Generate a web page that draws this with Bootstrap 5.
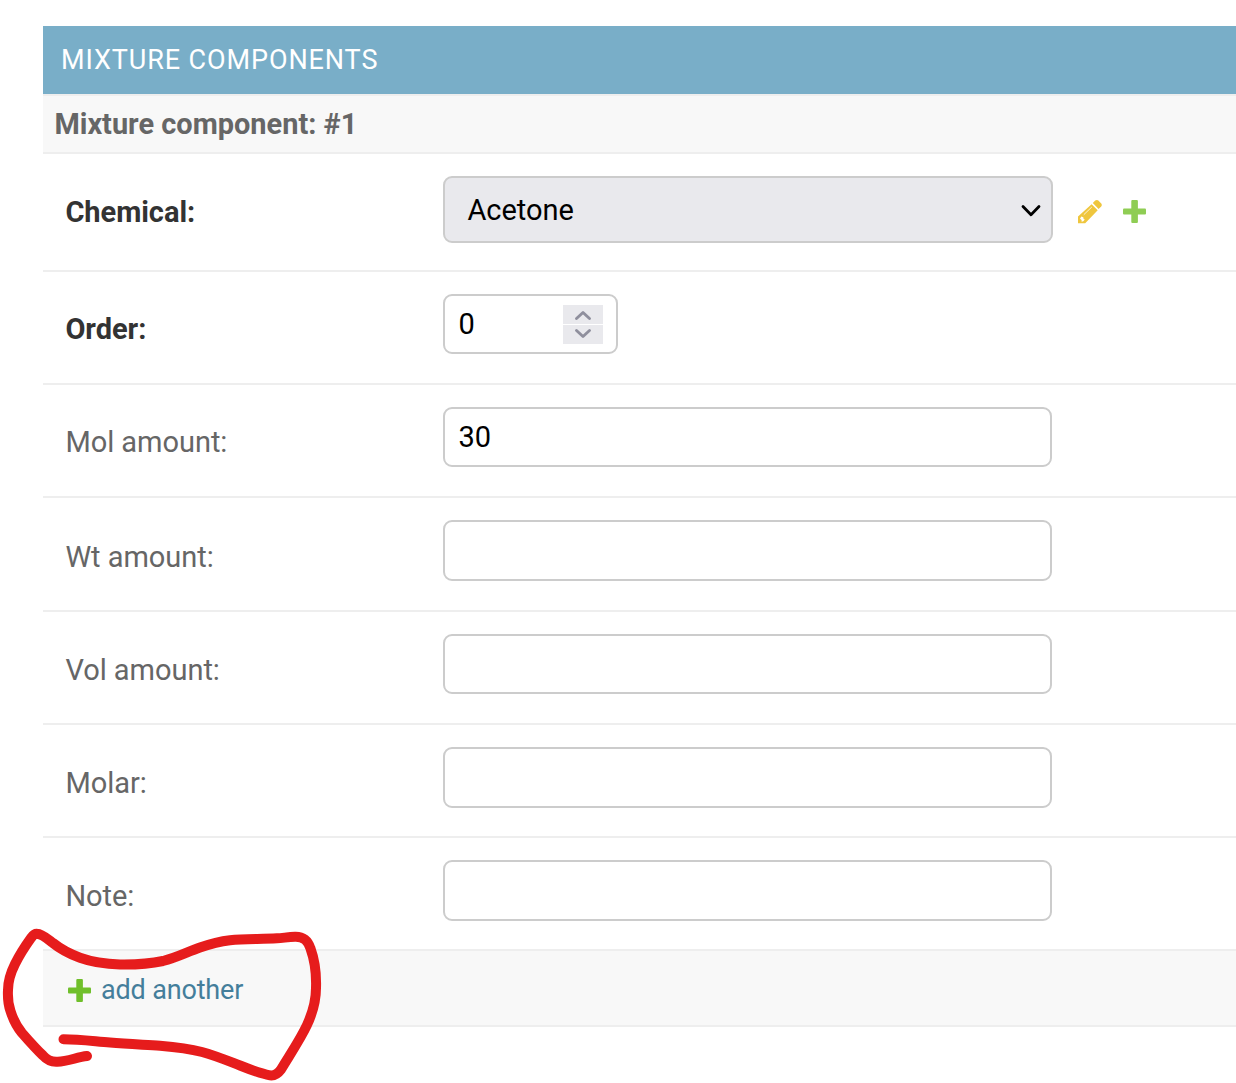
<!DOCTYPE html>
<html lang="en">
<head>
<meta charset="utf-8">
<title>Mixture components</title>
<link rel="stylesheet" href="https://cdn.jsdelivr.net/npm/bootstrap@5.3.0/dist/css/bootstrap.min.css">
<style>
body{font-family:Roboto,"Liberation Sans",sans-serif;font-size:29px;line-height:34px;color:#666;background:#fff;height:1083px;overflow:hidden}
.inline-group{padding:26px 0 0 43px}
.group-title{height:68px;background:#79aec8;color:#fff;font-size:27px;line-height:68px;letter-spacing:.9px;padding-left:18px;font-weight:400}
.item-title{height:60px;background:#f8f8f8;border-top:2px solid #eee;border-bottom:2px solid #eee;font-size:28.95px;line-height:56px;font-weight:700;padding-left:11.400px}
.form-line{height:113px;border-bottom:2px solid #eee;padding:22px 0 0 22px}
.form-line.tall{height:118px}
.form-line.plus-one{height:114px}
.field-label{width:378px;padding:18px 0 0 .4px;flex:none;letter-spacing:-.04px}
.field-label.drop{padding-top:19px}
.field-label.drop-more{padding-top:20px}
.required{font-weight:700;color:#333}
.form-line .form-control,.form-line .form-select{font-size:29px;line-height:34px;color:#000;border:2px solid #ccc;border-radius:9px;height:60px;width:609px;padding:0 13.400px;box-shadow:none}
.form-line .form-control.high{height:61px}
.form-line .form-select{height:67px;width:610px;background:#e9e9ed;padding:0 22.400px}
.form-line .order-input{width:175px}
.arrow{right:11px;top:28px;pointer-events:none}
.spinner{right:15px;top:11px;gap:1px}
.spin-btn{width:40px;height:19px;background:#e9e9ed}
.edit-icon{margin:23px 0 0 24px}
.add-icon{margin:24px 0 0 20px}
.row-icon{margin:4px 10px 0 0}
.add-row{height:76px;background:#f8f8f8;border-bottom:2px solid #eee;padding:0 0 0 25px;font-size:27px;letter-spacing:-.17px}
.add-row a{color:#447e9b;line-height:32px;padding-top:3px}
.scribble{left:0;top:0;pointer-events:none}
</style>
</head>
<body class="position-relative">
<main class="inline-group">
  <h2 class="group-title m-0">MIXTURE COMPONENTS</h2>
  <h3 class="item-title m-0">Mixture component: #1</h3>

  <div class="form-line tall d-flex align-items-start">
    <label class="field-label drop required" for="chem">Chemical:</label>
    <div class="position-relative">
      <select class="form-select" id="chem"><option>Acetone</option></select>
      <svg class="arrow position-absolute" width="22" height="14" viewBox="0 0 22 14"><path d="M3 2.500 11 10.700 19 2.500" fill="none" stroke="#000" stroke-width="2.800" stroke-linecap="round" stroke-linejoin="round"/></svg>
    </div>
    <svg class="edit-icon" width="26" height="26" viewBox="0 0 26 26">
      <g fill="#efc63e"><path d="M15.800 4 18.200 1.600Q20 .3 21.600 1.700L24.200 4.400Q25.700 6 24.200 7.500L21.600 10Z"/>
      <path fill-rule="evenodd" d="M14.600 5.200 20.700 11.200 8.200 24.300H1V17.500ZM4.300 17.600 3 19.800 4.600 21.100 4.600 22.800 6.300 22.300 7.800 20.600 6.600 20 6.300 18.200Z"/></g>
      <path d="M6.800 15.700 14.800 8" stroke="#fff" stroke-width=".8"/>
    </svg>
    <svg class="add-icon" width="24" height="24" viewBox="0 0 24 24" fill="#8fcd54"><rect x="8.300" width="6.600" height="23" rx="1"/><rect y="8.400" width="23" height="6.200" rx="1"/></svg>
  </div>

  <div class="form-line d-flex align-items-start">
    <label class="field-label required" for="order">Order:</label>
    <div class="position-relative">
      <input class="form-control order-input" id="order" type="text" value="0">
      <div class="spinner position-absolute d-flex flex-column">
        <div class="spin-btn d-flex justify-content-center"><svg width="18" height="19" viewBox="0 0 18 19"><path d="M2.500 13.500 9 7.500 15.500 13.500" fill="none" stroke="#8f8f9d" stroke-width="2.900" stroke-linecap="round" stroke-linejoin="round"/></svg></div>
        <div class="spin-btn d-flex justify-content-center"><svg width="18" height="19" viewBox="0 0 18 19"><path d="M2.500 5.500 9 11.500 15.500 5.500" fill="none" stroke="#8f8f9d" stroke-width="2.900" stroke-linecap="round" stroke-linejoin="round"/></svg></div>
      </div>
    </div>
  </div>

  <div class="form-line d-flex align-items-start">
    <label class="field-label" for="mol">Mol amount:</label>
    <input class="form-control" id="mol" type="text" value="30">
  </div>
  <div class="form-line plus-one d-flex align-items-start">
    <label class="field-label drop-more" for="wt">Wt amount:</label>
    <input class="form-control high" id="wt" type="text">
  </div>
  <div class="form-line d-flex align-items-start">
    <label class="field-label drop" for="vol">Vol amount:</label>
    <input class="form-control" id="vol" type="text">
  </div>
  <div class="form-line d-flex align-items-start">
    <label class="field-label drop" for="molar">Molar:</label>
    <input class="form-control high" id="molar" type="text">
  </div>
  <div class="form-line d-flex align-items-start">
    <label class="field-label drop" for="note">Note:</label>
    <input class="form-control high" id="note" type="text">
  </div>

  <div class="add-row d-flex align-items-center">
    <svg class="row-icon" width="23" height="23" viewBox="0 0 23 23" fill="#70bf2b"><rect x="8.300" width="6.600" height="23" rx="1"/><rect y="8.400" width="23" height="6.200" rx="1"/></svg>
    <a class="text-decoration-none" href="#">add another</a>
  </div>
</main>
<svg class="scribble position-absolute" width="340" height="1083" viewBox="0 0 340 1083">
  <path fill="none" stroke="#e61c1c" stroke-width="10" stroke-linecap="round" stroke-linejoin="round" d="M63.500 1039.300C80 1039.300 95 1041.500 110 1042.600C127 1044 143 1044.700 160 1045.800C174 1047 188 1048.500 202 1052C215 1055.500 227 1060.500 240 1065.500C250 1069.500 260 1073.500 270 1075.300C275 1076 278 1073.500 281 1069.500C289 1056 300 1040 307 1025C313 1012 316 1001 316 988C316.500 974 315 961 310.500 948.500C308 941 304 936.500 295 936.800C288 937 283 938 277 938.300C261 939.300 245 938.500 230 940.200C219 941.500 210 944 200 947.500C187 952 177 957.500 163 961C149 964 134 964.700 120 964.500C106 964.200 93 962.500 80 957.800C70 954 61 949.500 53 943C47 938.500 42 934 37 933.800C34 933.500 32.500 936 31 938C24.500 947 19.500 955 15 964C10.500 973 8 980 8 990C7.700 996 8 1004 10.500 1011C13 1019 17 1027 22 1033C29 1041 36 1049 43 1055.500C47 1060 51 1062 57 1061.700C67 1062 77 1057 87 1056"/>
</svg>
<script src="https://cdn.jsdelivr.net/npm/bootstrap@5.3.0/dist/js/bootstrap.bundle.min.js"></script>
</body>
</html>
